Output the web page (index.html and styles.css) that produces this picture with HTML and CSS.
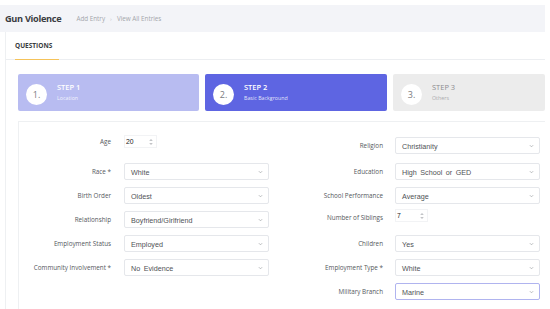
FILE: index.html
```html
<!DOCTYPE html>
<html lang="en">
<head>
    <meta charset="UTF-8">
    <meta name="viewport" content="width=device-width, initial-scale=1.0">
    <title>Gun Violence - Add Entry</title>
    <link rel="stylesheet" href="styles.css">
</head>
<body>
    <div class="topbar">
        <span class="app_title">Gun Violence</span>
        <span class="crumb">Add Entry</span>
        <span class="crumb_sep">›</span>
        <span class="crumb">View All Entries</span>
    </div>

    <div class="card">
        <div class="tabs">
            <span class="tab active">QUESTIONS</span>
        </div>

        <div class="steps">
            <div class="step done">
                <div class="step_num">1.</div>
                <div class="step_text">
                    <div class="step_title">STEP 1</div>
                    <div class="step_sub">Location</div>
                </div>
            </div>
            <div class="step current">
                <div class="step_num">2.</div>
                <div class="step_text">
                    <div class="step_title">STEP 2</div>
                    <div class="step_sub">Basic Background</div>
                </div>
            </div>
            <div class="step todo">
                <div class="step_num">3.</div>
                <div class="step_text">
                    <div class="step_title">STEP 3</div>
                    <div class="step_sub">Others</div>
                </div>
            </div>
        </div>

        <div class="form">
            <div class="form_col left_col">
                <div class="row row_age">
                    <label class="row_label">Age</label>
                    <div class="number">20 <svg class="spin" viewBox="0 0 4 8"><path d="M0.8 3 L2 1.6 L3.2 3 M0.8 5 L2 6.4 L3.2 5"/></svg></div>
                </div>
                <div class="row">
                    <label class="row_label">Race *</label>
                    <div class="select">White <svg class="chev" viewBox="0 0 6 4"><path d="M1 1 L3 3 L5 1"/></svg></div>
                </div>
                <div class="row">
                    <label class="row_label">Birth Order</label>
                    <div class="select">Oldest <svg class="chev" viewBox="0 0 6 4"><path d="M1 1 L3 3 L5 1"/></svg></div>
                </div>
                <div class="row">
                    <label class="row_label">Relationship</label>
                    <div class="select">Boyfriend/Girlfriend <svg class="chev" viewBox="0 0 6 4"><path d="M1 1 L3 3 L5 1"/></svg></div>
                </div>
                <div class="row">
                    <label class="row_label">Employment Status</label>
                    <div class="select">Employed <svg class="chev" viewBox="0 0 6 4"><path d="M1 1 L3 3 L5 1"/></svg></div>
                </div>
                <div class="row">
                    <label class="row_label">Community Involvement *</label>
                    <div class="select">No Evidence <svg class="chev" viewBox="0 0 6 4"><path d="M1 1 L3 3 L5 1"/></svg></div>
                </div>
            </div>

            <div class="form_col right_col">
                <div class="row row_religion">
                    <label class="row_label">Religion</label>
                    <div class="select">Christianity <svg class="chev" viewBox="0 0 6 4"><path d="M1 1 L3 3 L5 1"/></svg></div>
                </div>
                <div class="row">
                    <label class="row_label">Education</label>
                    <div class="select">High School or GED <svg class="chev" viewBox="0 0 6 4"><path d="M1 1 L3 3 L5 1"/></svg></div>
                </div>
                <div class="row">
                    <label class="row_label">School Performance</label>
                    <div class="select">Average <svg class="chev" viewBox="0 0 6 4"><path d="M1 1 L3 3 L5 1"/></svg></div>
                </div>
                <div class="row row_siblings">
                    <label class="row_label">Number of Siblings</label>
                    <div class="number">7 <svg class="spin" viewBox="0 0 4 8"><path d="M0.8 3 L2 1.6 L3.2 3 M0.8 5 L2 6.4 L3.2 5"/></svg></div>
                </div>
                <div class="row">
                    <label class="row_label">Children</label>
                    <div class="select">Yes <svg class="chev" viewBox="0 0 6 4"><path d="M1 1 L3 3 L5 1"/></svg></div>
                </div>
                <div class="row">
                    <label class="row_label">Employment Type *</label>
                    <div class="select">White <svg class="chev" viewBox="0 0 6 4"><path d="M1 1 L3 3 L5 1"/></svg></div>
                </div>
                <div class="row">
                    <label class="row_label">Military Branch</label>
                    <div class="select focused">Marine <svg class="chev" viewBox="0 0 6 4"><path d="M1 1 L3 3 L5 1"/></svg></div>
                </div>
            </div>
        </div>
    </div>
</body>
</html>
```

FILE: styles.css
```css
body {
    margin: 0;
    padding: 0;
    background-color: #ffffff;
    font-family: "Open Sans", Arial, sans-serif;
    overflow: hidden;
}
.topbar {
    display: flex;
    align-items: center;
    margin-top: 5px;
    width: 540px;
    height: 27px;
    padding-left: 5px;
    background-color: #f3f4f8;
}
.app_title {
    font-size: 9.2px;
    font-weight: 700;
    letter-spacing: -0.3px;
    color: #3a3d42;
    margin-right: 15px;
}
.crumb {
    font-size: 6.3px;
    color: #a3a6ab;
}
.crumb_sep {
    font-size: 6px;
    color: #c4c6ca;
    margin: 0 5px;
}
.card {
    margin-left: 5px;
    width: 539px;
    height: 277px;
    border-left: 1px solid #eef0f2;
}
.tabs {
    display: flex;
    height: 27px;
    padding-left: 9px;
    border-bottom: 1px solid #eceef1;
}
.tab {
    display: flex;
    align-items: center;
    padding-right: 7px;
    font-size: 6.5px;
    font-weight: 700;
    color: #3a3d42;
}
.tab.active {
    border-bottom: 1px solid #f5c35a;
    margin-bottom: -1px;
}
.steps {
    display: flex;
    gap: 6px;
    margin-top: 14px;
    padding-left: 12px;
}
.step {
    display: flex;
    align-items: center;
    height: 37px;
    padding-left: 8px;
    border-radius: 2px;
    box-sizing: border-box;
}
.step.done {
    width: 181px;
    background-color: #b8bcf1;
}
.step.current {
    width: 182px;
    background-color: #5e65e2;
}
.step.todo {
    flex: 1;
    background-color: #ececec;
}
.step_num {
    display: flex;
    align-items: center;
    justify-content: center;
    width: 21px;
    height: 21px;
    margin-top: 3px;
    margin-right: 10px;
    border-radius: 50%;
    background-color: #ffffff;
    font-size: 9px;
    color: #7a7c80;
}
.step_title {
    font-size: 7.5px;
    font-weight: 600;
    line-height: 9px;
    color: #ffffff;
}
.step_sub {
    margin-top: 3px;
    font-size: 5.3px;
    line-height: 7px;
    color: rgba(255, 255, 255, 0.85);
}
.step.todo .step_title {
    color: #8c8d90;
    font-weight: 400;
}
.step.todo .step_sub {
    color: #aaabae;
}
.form {
    display: flex;
    margin-top: 10px;
    margin-left: 12px;
    height: 200px;
    border: 1px solid #eef0f2;
    border-right: none;
}
.form_col {
    display: flex;
    flex-direction: column;
}
.left_col {
    padding-top: 13px;
}
.right_col {
    padding-top: 15px;
    margin-left: 14px;
}
.row {
    display: flex;
    align-items: center;
    margin-bottom: 7px;
}
.row_label {
    width: 92px;
    margin-right: 13px;
    text-align: right;
    font-size: 6.3px;
    color: #55585c;
}
.right_col .row_label {
    width: 100px;
    margin-right: 12px;
}
.select {
    display: flex;
    align-items: center;
    justify-content: space-between;
    width: 145px;
    height: 17px;
    box-sizing: border-box;
    padding: 1px 5px 0 6px;
    border: 1px solid #e5e7eb;
    border-radius: 2px;
    font-family: "Liberation Sans", Arial, sans-serif;
    font-size: 7.2px;
    word-spacing: 1.5px;
    color: #4f5256;
}
.select.focused {
    border-color: #b0b4ef;
}
.chev {
    width: 5px;
    height: 4px;
    fill: none;
    stroke: #9a9da2;
    stroke-width: 0.8;
}
.number {
    display: flex;
    align-items: center;
    justify-content: space-between;
    width: 33px;
    height: 13px;
    box-sizing: border-box;
    padding: 0 3px 0 1px;
    border: 1px solid #f2f3f5;
    font-family: "Liberation Sans", Arial, sans-serif;
    font-size: 6.8px;
    color: #222222;
}
.spin {
    width: 4px;
    height: 8px;
    fill: none;
    stroke: #8a8d92;
    stroke-width: 0.7;
}
.row_age {
    margin-bottom: 15px;
}
.row_religion {
    margin-bottom: 9px;
}
.row_siblings {
    margin-top: -2px;
    margin-bottom: 13px;
}
.row_siblings .row_label {
    margin-top: 4px;
}
```
